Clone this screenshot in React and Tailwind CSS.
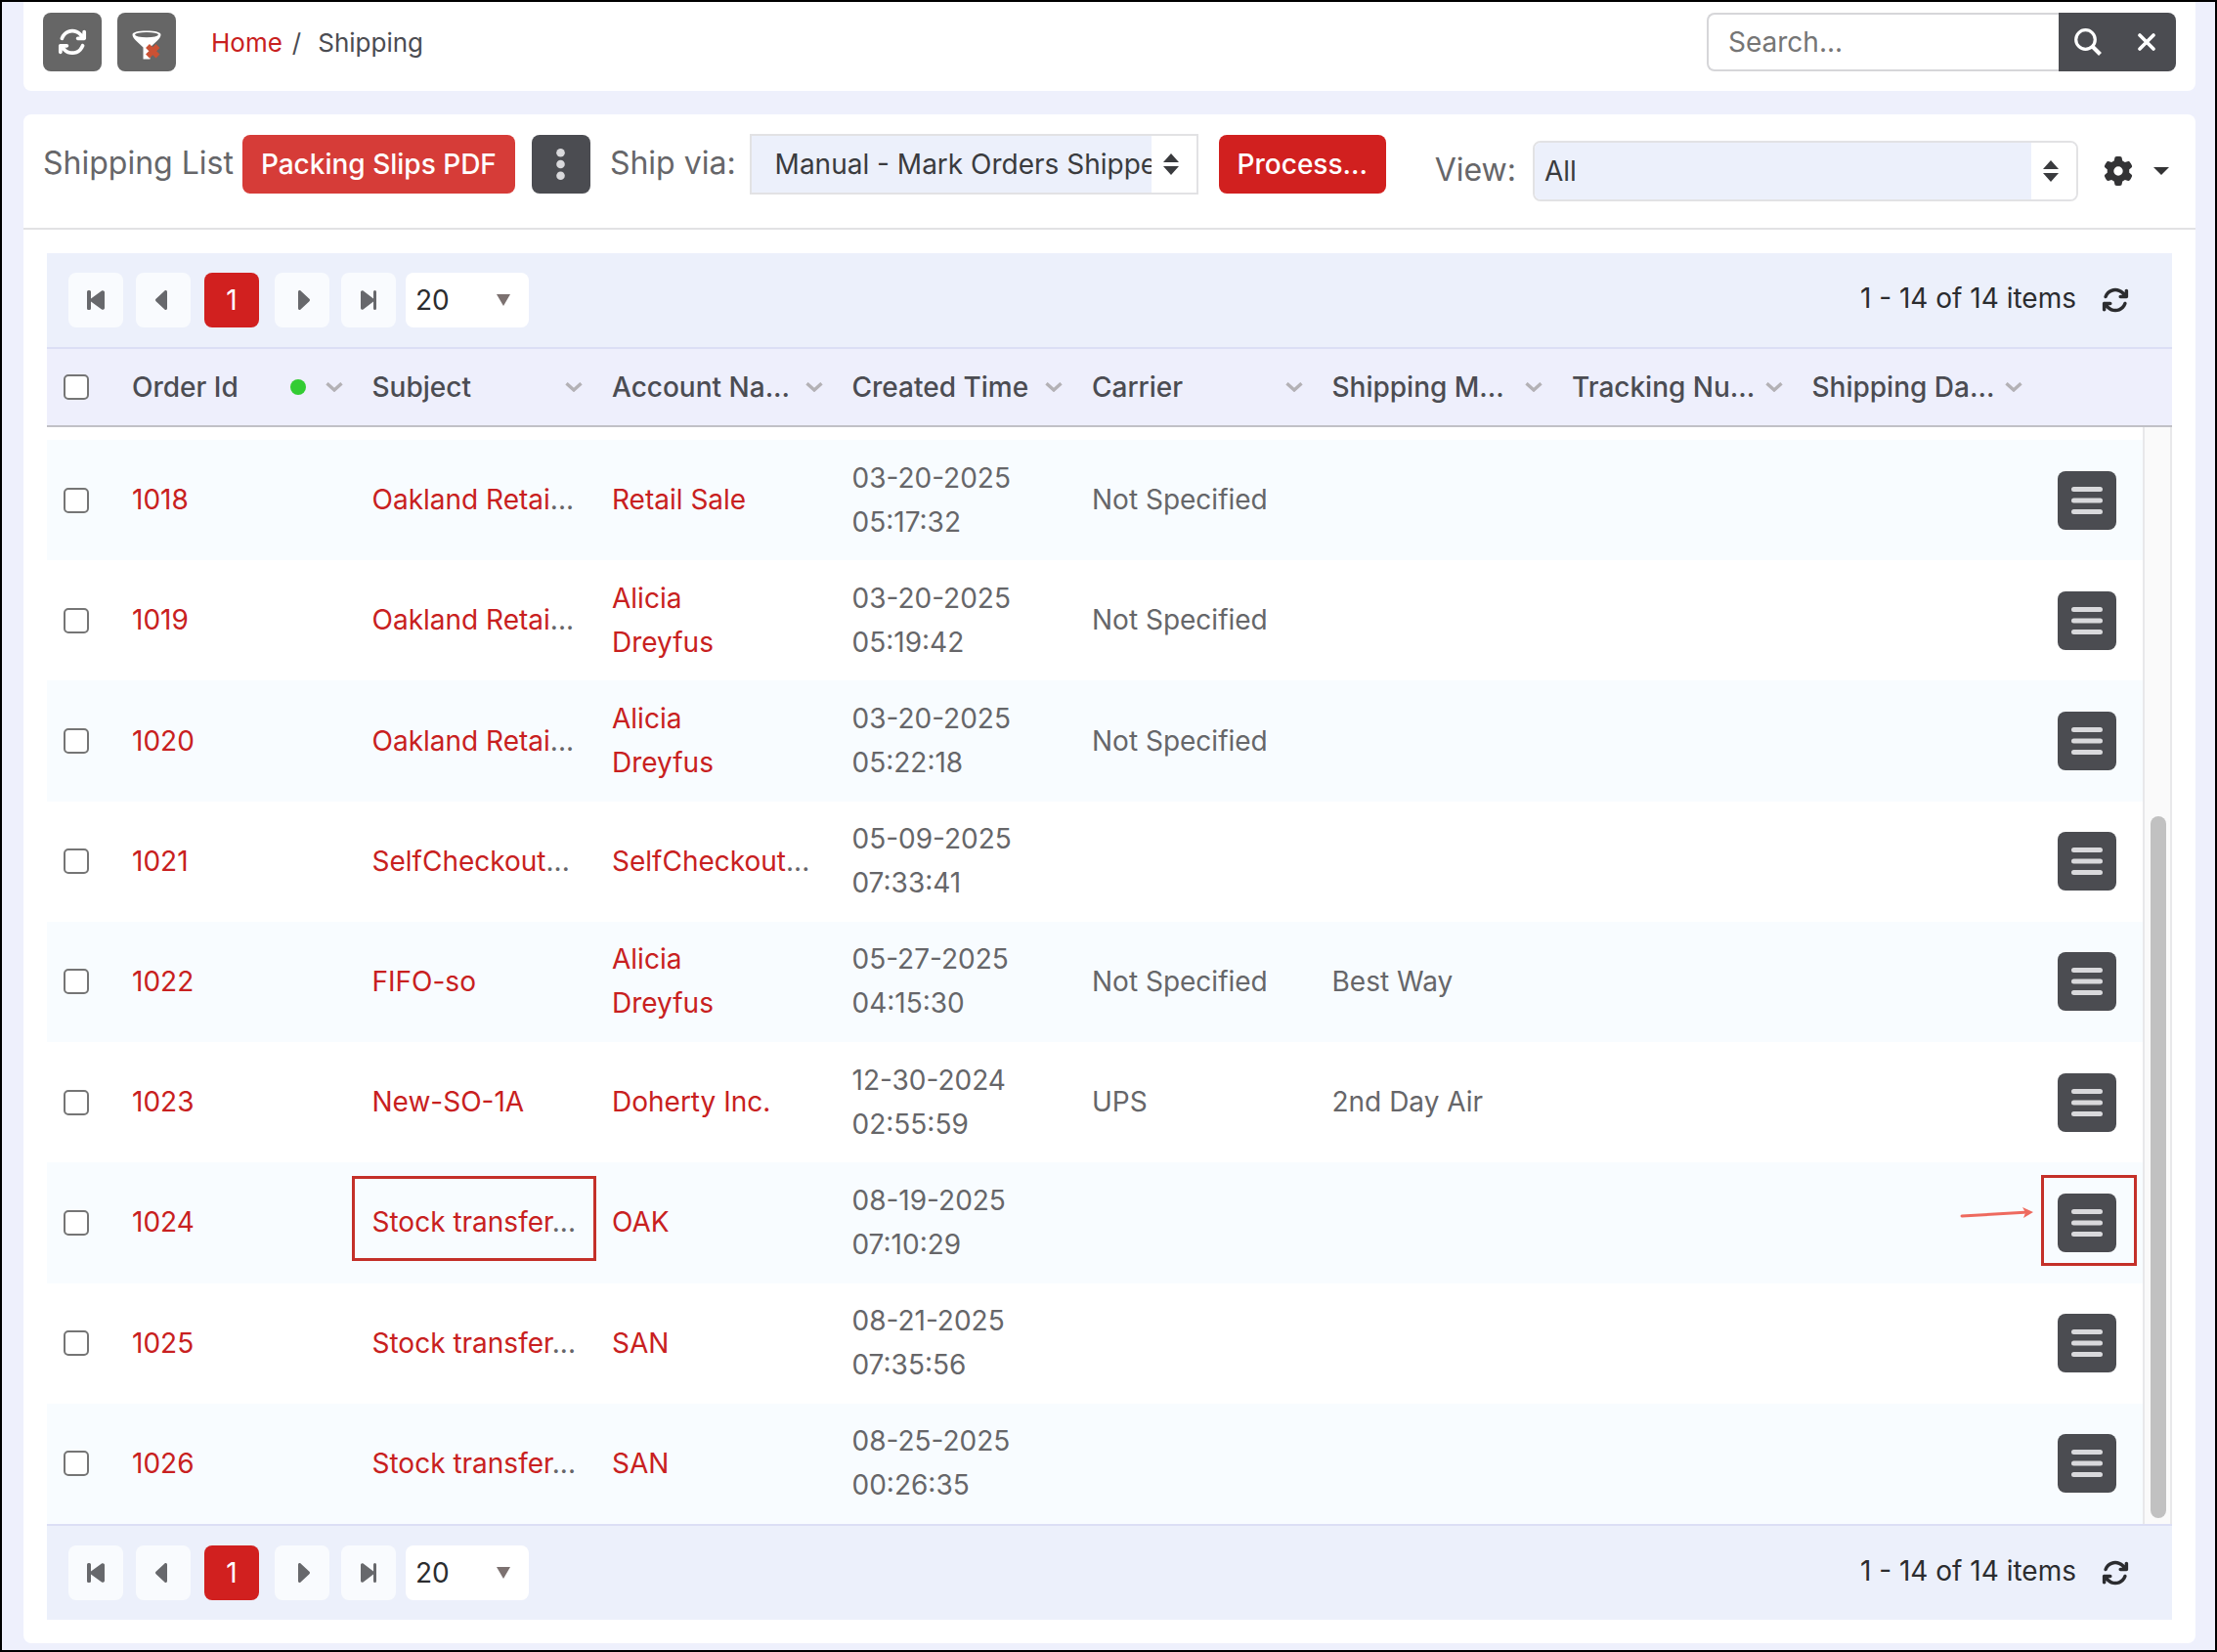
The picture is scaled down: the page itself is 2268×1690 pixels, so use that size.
import { FaArrowsRotate, FaGear } from "react-icons/fa6";

const columns = [
  { label: "Order Id", sorted: true },
  { label: "Subject" },
  { label: "Account Na..." },
  { label: "Created Time" },
  { label: "Carrier" },
  { label: "Shipping M..." },
  { label: "Tracking Nu..." },
  { label: "Shipping Da..." },
];

const orders = [
  { id: "1018", subject: "Oakland Retai", cut: true, account: ["Retail Sale"], created: "03-20-2025 05:17:32", carrier: "Not Specified" },
  { id: "1019", subject: "Oakland Retai", cut: true, account: ["Alicia", "Dreyfus"], created: "03-20-2025 05:19:42", carrier: "Not Specified" },
  { id: "1020", subject: "Oakland Retai", cut: true, account: ["Alicia", "Dreyfus"], created: "03-20-2025 05:22:18", carrier: "Not Specified" },
  { id: "1021", subject: "SelfCheckout", cut: true, account: ["SelfCheckout"], accountCut: true, created: "05-09-2025 07:33:41" },
  { id: "1022", subject: "FIFO-so", account: ["Alicia", "Dreyfus"], created: "05-27-2025 04:15:30", carrier: "Not Specified", method: "Best Way" },
  { id: "1023", subject: "New-SO-1A", account: ["Doherty Inc."], created: "12-30-2024 02:55:59", carrier: "UPS", method: "2nd Day Air" },
  { id: "1024", subject: "Stock transfer", cut: true, account: ["OAK"], created: "08-19-2025 07:10:29", marked: true },
  { id: "1025", subject: "Stock transfer", cut: true, account: ["SAN"], created: "08-21-2025 07:35:56" },
  { id: "1026", subject: "Stock transfer", cut: true, account: ["SAN"], created: "08-25-2025 00:26:35" },
];

const checkboxClass =
  "block size-[26px] appearance-none rounded-[5px] border-2 border-[#757575] bg-white checked:bg-[#d1201f]";

function UpDown() {
  return (
    <svg className="h-[22px] w-4" viewBox="0 0 16 22" fill="#3a3b3e" aria-hidden="true">
      <path d="M8 0l8 9H0zM8 22l8-9H0z" />
    </svg>
  );
}

function Chevron() {
  return (
    <svg className="h-2.5 w-[18px] shrink-0" viewBox="0 0 18 10" fill="none" stroke="#b3b1b5" strokeWidth="3.400" aria-hidden="true">
      <path d="M1.500 1.200L9 8l7.500-6.800" />
    </svg>
  );
}

function FunnelClear() {
  return (
    <svg className="h-[30px] w-[30px]" viewBox="0 0 30 30" aria-hidden="true">
      <path d="M.5 4.500C.5 2 6 .5 15 .5s14.500 1.500 14.500 4c0 2-1.500 4-3.500 6l-7.500 7V29.500h-7V17.500L4 10.500c-2-2-3.500-4-3.500-6z" fill="#fff" />
      <ellipse cx="15" cy="4.600" rx="12" ry="2.600" fill="#666" />
      <path d="M16 16l10.500 10.500M26.500 16L16 26.500" stroke="#cb5134" strokeWidth="5.500" />
    </svg>
  );
}

function Columns() {
  return (
    <colgroup>
      <col className="w-[70px]" />
      {columns.map((c) => (
        <col key={c.label} />
      ))}
      <col className="w-[110px]" />
    </colgroup>
  );
}

const pageButton =
  "flex size-14 items-center justify-center rounded-lg bg-[#f9fbfe] text-[#67686c]";

function Pager() {
  return (
    <nav aria-label="Pages" className="flex h-24 items-center bg-[#ecf0fb] pr-[44px] pl-[22px] text-[#2b2c2f]">
      <button className={pageButton} aria-label="First page">
        <svg className="h-5 w-[18px]" viewBox="0 0 18 20" fill="currentColor" aria-hidden="true">
          <path d="M1.500 0h1A1.500 1.500 0 0 1 4 1.500v7L15 .6c1.300-.9 3 0 3 1.500v15.800c0 1.500-1.700 2.400-3 1.500L4 11.500v7A1.500 1.500 0 0 1 2.500 20h-1A1.500 1.500 0 0 1 0 18.500v-17A1.500 1.500 0 0 1 1.500 0z" />
        </svg>
      </button>
      <button className={`${pageButton} ml-[13px]`} aria-label="Previous page">
        <svg className="mr-1 h-5 w-3" viewBox="0 0 12 20" fill="currentColor" aria-hidden="true">
          <path d="M12 1.500v17c0 1.400-1.600 2-2.600 1L.8 11.500a2 2 0 0 1 0-3L9.400.5c1-1 2.600-.4 2.600 1z" />
        </svg>
      </button>
      <button className="ml-3.5 flex size-14 items-center justify-center rounded-lg bg-[#d1201f] text-white" aria-current="page">
        1
      </button>
      <button className={`${pageButton} ml-4`} aria-label="Next page">
        <svg className="ml-1 h-5 w-3" viewBox="0 0 12 20" fill="currentColor" aria-hidden="true">
          <path d="M0 1.500v17c0 1.400 1.600 2 2.600 1l8.600-8a2 2 0 0 0 0-3L2.600.5C1.600-.5 0 .1 0 1.500z" />
        </svg>
      </button>
      <button className={`${pageButton} ml-3`} aria-label="Last page">
        <svg className="h-5 w-4" viewBox="0 0 16 20" fill="currentColor" aria-hidden="true">
          <path d="M14.500 0A1.500 1.500 0 0 0 13 1.500v7L2.600.6C1.300-.3 0 .6 0 2.100v15.800c0 1.500 1.300 2.400 2.600 1.500L13 11.500v7a1.500 1.500 0 0 0 3 0v-17A1.500 1.500 0 0 0 14.500 0z" />
        </svg>
      </button>
      <div className="relative ml-2.5 h-14 w-[126px]">
        <select aria-label="Items per page" className="size-full appearance-none rounded-lg bg-white pl-2.5">
          <option>20</option>
        </select>
        <svg className="pointer-events-none absolute top-[22px] right-[19px] h-3 w-3.5" viewBox="0 0 14 12" fill="#7c7170" aria-hidden="true">
          <path d="M0 0h14L7 12z" />
        </svg>
      </div>
      <span className="mr-[26px] ml-auto pb-1">1 - 14 of 14 items</span>
      <button aria-label="Reload" className="text-[28px]">
        <FaArrowsRotate />
      </button>
    </nav>
  );
}

function OrderRow({ order }) {
  return (
    <tr className="h-[123px] odd:bg-[#f8fcff]">
      <td className="pl-[17px]">
        <input type="checkbox" aria-label={`Select order ${order.id}`} className={checkboxClass} />
      </td>
      <td className="px-[17px]">
        <a href="#order" className="text-[#c82020]">{order.id}</a>
      </td>
      <td className="relative px-[17px] whitespace-nowrap">
        <a href="#order" className="text-[#c82020]">{order.subject}</a>
        {order.cut && "..."}
        {order.marked && (
          <span className="absolute top-3.5 -left-1 h-[87px] w-[250px] border-[3px] border-[#c43029]" />
        )}
      </td>
      <td className="px-[17px] whitespace-nowrap">
        <a href="#account" className="text-[#c82020]">
          {order.account[0]}
          {order.account[1] && <br />}
          {order.account[1]}
        </a>
        {order.accountCut && "..."}
      </td>
      <td className="px-[17px]">{order.created}</td>
      <td className="px-[17px]">{order.carrier}</td>
      <td className="px-[17px]">{order.method}</td>
      <td />
      <td />
      <td className="relative pl-[23px]">
        <button aria-label={`Actions for order ${order.id}`} className="flex size-[60px] items-center justify-center rounded-lg bg-[#4b4c51]">
          <svg className="h-7 w-8" viewBox="0 0 32 28" stroke="#d9d9dc" strokeWidth="5" strokeLinecap="round" aria-hidden="true">
            <path d="M2.500 2.500h27M2.500 14h27M2.500 25.500h27" />
          </svg>
        </button>
        {order.marked && (
          <>
            <span className="absolute top-[13px] left-1.5 h-[93px] w-[98px] border-[3px] border-[#c43029]" />
            <svg className="absolute top-[46px] -left-[77px] h-3 w-[75px]" viewBox="0 0 75 12" aria-hidden="true">
              <path d="M2 9L66 5.200" stroke="#ee6a5f" strokeWidth="3" strokeLinecap="round" />
              <path d="M64 0l11 5-10 6 2-5.600z" fill="#ee6a5f" />
            </svg>
          </>
        )}
      </td>
    </tr>
  );
}

export default function App() {
  return (
    <div className="border-2 border-black bg-[#eef0fc] pr-5 pb-[7px] pl-[22px] font-['Inter',sans-serif] text-[28px] leading-[45px] text-[#666669]">
      <header className="flex h-[91px] items-start rounded-b-lg bg-white px-5 pt-[11px]">
        <button aria-label="Refresh" className="flex size-[60px] items-center justify-center rounded-lg bg-[#666] text-[30px] text-white">
          <FaArrowsRotate />
        </button>
        <button aria-label="Clear filters" className="ml-4 flex size-[60px] items-center justify-center rounded-lg bg-[#666] pt-1.5">
          <FunnelClear />
        </button>
        <nav aria-label="Breadcrumb" className="ml-9 flex h-[60px] items-center text-[26px] text-[#4b4c52]">
          <a href="#home" className="text-[#c82020]">Home</a>
          <span className="ml-2.5">/</span>
          <span className="ml-[17px]">Shipping</span>
        </nav>
        <form className="ml-auto flex h-[60px]" role="search">
          <input
            type="text"
            aria-label="Search"
            placeholder="Search..."
            className="w-[360px] rounded-l-lg border-2 border-r-0 border-[#d6d6d9] bg-white px-5 text-[28px] placeholder:text-[#757575]"
          />
          <button type="button" aria-label="Search" className="flex w-[60px] items-center justify-center bg-[#4b4c51]">
            <svg className="h-7 w-7" viewBox="0 0 28 28" fill="none" stroke="#fff" strokeWidth="3.200" aria-hidden="true">
              <circle cx="11.500" cy="11.500" r="9.800" />
              <path d="M18.500 18.500l8 8" strokeWidth="4" />
            </svg>
          </button>
          <button type="button" aria-label="Clear search" className="flex w-[60px] items-center justify-center rounded-r-lg bg-[#4b4c51]">
            <svg className="h-[18px] w-[18px]" viewBox="0 0 18 18" stroke="#fff" strokeWidth="3.600" strokeLinecap="round" aria-hidden="true">
              <path d="M2 2l14 14M16 2L2 16" />
            </svg>
          </button>
        </form>
      </header>

      <main className="mt-6 rounded-lg bg-white">
        <div className="flex h-[118px] items-start justify-between border-b-2 border-[#e2e2e4] pr-[27px] pl-5 text-[32px]">
          <div className="flex items-center pt-5">
            <h1 className="pb-1">Shipping List</h1>
            <button className="ml-[9px] h-[60px] rounded-lg bg-[#d63c38] px-[19px] text-[28px] font-medium text-white">Packing Slips PDF</button>
            <button aria-label="More actions" className="ml-[17px] flex size-[60px] items-center justify-center rounded-lg bg-[#4b4c51]">
              <svg className="h-8 w-[9px]" viewBox="0 0 9 32" fill="#d9d9dc" aria-hidden="true">
                <circle cx="4.500" cy="4.300" r="4.300" />
                <circle cx="4.500" cy="16" r="4.300" />
                <circle cx="4.500" cy="27.700" r="4.300" />
              </svg>
            </button>
            <label htmlFor="ship-via" className="ml-5 pb-1">Ship via:</label>
            <div className="relative ml-3.5 flex h-[62px] w-[459px] border-2 border-[#e2e2e4]">
              <select id="ship-via" className="size-full appearance-none bg-[#ecf0fb] pl-6 text-[28px] text-[#3a3b3e]">
                <option>Manual - Mark Orders Shipped</option>
              </select>
              <span className="pointer-events-none absolute inset-y-0 right-0 flex w-[46px] items-center justify-center bg-white pr-1.5">
                <UpDown />
              </span>
            </div>
            <button className="ml-[21px] h-[60px] rounded-lg bg-[#d1201f] px-[19px] text-[28px] font-medium text-white">Process...</button>
          </div>
          <div className="flex items-center pt-[27px]">
            <label htmlFor="view" className="pb-1">View:</label>
            <div className="relative ml-[17px] flex h-[62px] w-[558px] overflow-hidden rounded-lg border-2 border-[#e2e2e4]">
              <select id="view" className="size-full appearance-none bg-[#ecf0fb] pl-2.5 text-[28px] text-[#3a3b3e]">
                <option>All</option>
              </select>
              <span className="pointer-events-none absolute inset-y-0 right-0 flex w-[46px] items-center justify-center bg-white pr-1.5">
                <UpDown />
              </span>
            </div>
            <button aria-label="Settings" className="ml-[26px] flex items-center gap-[21px] text-[30px] text-[#333335]">
              <FaGear />
              <svg className="h-2 w-4" viewBox="0 0 16 8" fill="currentColor" aria-hidden="true">
                <path d="M0 0h16L8 8z" />
              </svg>
            </button>
          </div>
        </div>

        <section aria-label="Orders" className="p-6">
          <Pager />
          <div className="border-t-2 border-b-2 border-t-[#dcdff5] border-b-[#c0c0c6] bg-[#eeeffc] pr-[30px]">
            <table className="w-full table-fixed">
              <Columns />
              <thead>
                <tr className="h-[78px] text-left text-[#4b4c52]">
                  <th className="pl-[17px]">
                    <input type="checkbox" aria-label="Select all orders" className={checkboxClass} />
                  </th>
                  {columns.map((c) => (
                    <th key={c.label} className="pr-[13px] pl-[17px] font-medium whitespace-nowrap">
                      <div className="flex items-center">
                        {c.label}
                        {c.sorted && <span className="ml-auto size-4 rounded-full bg-[#33cc33]" />}
                        <span className={c.sorted ? "ml-5" : "ml-auto"}>
                          <Chevron />
                        </span>
                      </div>
                    </th>
                  ))}
                  <th aria-label="Actions" />
                </tr>
              </thead>
            </table>
          </div>
          <div className="flex">
            <div className="min-w-0 flex-1 pt-[13px]">
              <table className="h-[1109px] w-full table-fixed">
                <Columns />
                <tbody>
                  {orders.map((order) => (
                    <OrderRow key={order.id} order={order} />
                  ))}
                </tbody>
              </table>
            </div>
            <div className="flex w-[30px] flex-col justify-end border-x-2 border-[#e8e8ea] bg-[#fafafa] pr-1 pb-1.5 pl-1.5">
              <div className="h-[718px] rounded-full bg-[#c1c1c1]" />
            </div>
          </div>
          <div className="border-t-2 border-[#dcdff5]">
            <Pager />
          </div>
        </section>
      </main>
    </div>
  );
}
